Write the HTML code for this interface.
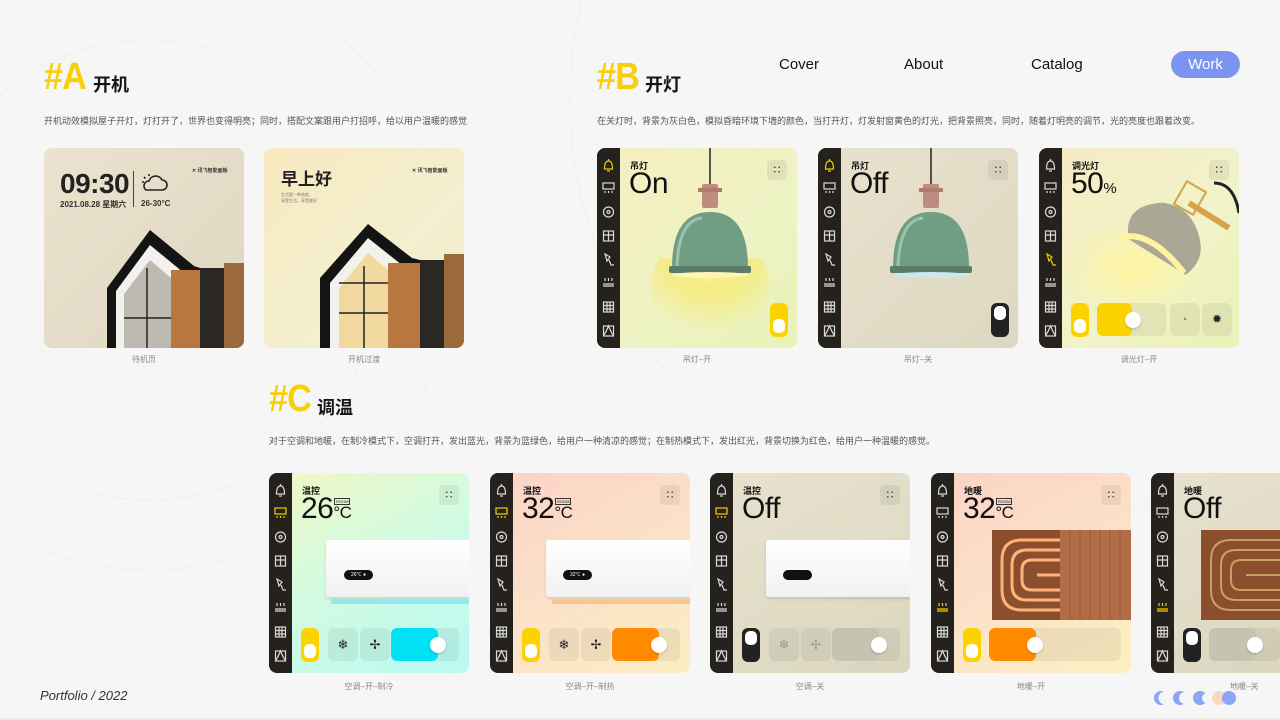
<!DOCTYPE html>
<html><head><meta charset="utf-8"><style>
*{margin:0;padding:0;box-sizing:border-box}
body{width:1280px;height:720px;overflow:hidden;background:#f6f6f6;position:relative;font-family:"Liberation Sans","Noto Sans CJK SC",sans-serif;color:#111}
.a{position:absolute}
.hd{position:absolute;font-family:"Liberation Sans Narrow","Liberation Sans",sans-serif;font-weight:900;font-size:38px;color:#f7cf0a;letter-spacing:-1px;transform:scaleX(.9);transform-origin:left}
.ht{position:absolute;font-size:18px;font-weight:700;color:#151515}
.ds{position:absolute;font-size:9px;color:#555;white-space:nowrap}
.cap{position:absolute;width:200px;text-align:center;font-size:8px;color:#888}
.card{position:absolute;width:200px;height:200px;border-radius:8px;overflow:hidden}
.sb{position:absolute;left:0;top:0;width:23px;height:200px;background:#25221e}
.sb svg{stroke:#d9d9d9;fill:none;stroke-width:1.2}
.h1 .i1,.h2 .i2,.h5 .i5,.h6 .i6{stroke:#f5cd00}
.lb{position:absolute;left:33px;top:11px;font-size:9px;font-weight:700}
.big{position:absolute;left:32px;top:20px;font-size:30px;line-height:32px;font-weight:400;letter-spacing:-.5px}
.dots{position:absolute;left:170px;top:12px;width:20px;height:20px;border-radius:4px;background:rgba(0,0,0,.06);font-size:9px;text-align:center;line-height:20px;color:#333;font-weight:700}
.tg{position:absolute;width:18px;height:34px;border-radius:6px;background:#fcd200}
.tg i{position:absolute;left:3px;top:16px;width:12px;height:14px;border-radius:5px;background:#fff}
.tg.off{background:#222}.tg.off i{top:3px}
.btn{position:absolute;width:30px;height:33px;border-radius:6px;background:rgba(0,0,0,.06);text-align:center;line-height:33px;font-size:13px;color:#222}
.sl{position:absolute;height:33px;border-radius:6px;background:rgba(0,0,0,.06);overflow:hidden}
.sl b{position:absolute;left:0;top:0;height:33px;border-radius:6px}
.kn{position:absolute;width:16px;height:16px;border-radius:50%;background:#fff;box-shadow:0 1px 2px rgba(0,0,0,.2)}
.nav{position:absolute;top:56px;font-size:15px;color:#111}
</style></head><body>
<svg class="a" style="left:0;top:0" width="1280" height="720" fill="none" stroke="#efefef" stroke-width="1">
<circle cx="150" cy="270" r="230"/><circle cx="150" cy="270" r="300"/><circle cx="1000" cy="100" r="430"/>
</svg>

<div class="hd" style="left:44px;top:56px">#A</div>
<div class="ht" style="left:93px;top:71px">开机</div>
<div class="ds" style="left:44px;top:114px">开机动效模拟屋子开灯，灯打开了，世界也变得明亮；同时，搭配文案跟用户打招呼，给以用户温暖的感觉</div>

<div class="card" style="left:44px;top:148px;background:linear-gradient(135deg,#ece3cf,#ddd6c0)">
<div class="a" style="left:16px;top:20px;font-size:28px;font-weight:700;letter-spacing:-.5px;color:#222">09:30</div>
<div class="a" style="left:16px;top:51px;font-size:8px;font-weight:700;color:#333">2021.08.28 星期六</div>
<div class="a" style="left:89px;top:23px;width:1px;height:36px;background:#444"></div>
<svg class="a" style="left:96px;top:22px" width="30" height="24" fill="none" stroke="#222" stroke-width="1.6"><path d="M6 20h16a5 5 0 0 0 0-10a7 7 0 0 0-13 1a5 5 0 0 0-3 9z"/><path d="M9 4v2M4 7l1.5 1.5M2 12h2"/></svg>
<div class="a" style="left:97px;top:51px;font-size:8px;font-weight:700;color:#333">26-30°C</div>
<div class="a" style="left:148px;top:19px;font-size:5px;font-weight:700;color:#333">✕ 讯飞智能面板</div>
<svg class="a" style="left:0;top:0" width="200" height="200">
<polygon points="63,200 63,140 106,82 150,118 156,120 156,200" fill="#141414"/>
<polygon points="72,200 72,143 106,97 140,125 140,200" fill="#f2f1ef"/>
<polygon points="80,200 80,146 106,112 127,130 127,200" fill="#bdbab2"/>
<rect x="127" y="122" width="29" height="78" fill="#b7773f"/>
<rect x="156" y="120" width="44" height="80" fill="#2b2724"/>
<rect x="180" y="115" width="20" height="85" fill="#9a6a3c"/>
<path d="M80 170h47M103 120v80" stroke="#222" stroke-width="1.5"/>
</svg>
</div>
<div class="cap" style="left:44px;top:354px">待机页</div>

<div class="card" style="left:264px;top:148px;background:linear-gradient(135deg,#f8e9bf,#f3efcf 60%,#eef0c9)">
<div class="a" style="left:17px;top:17px;font-size:17px;font-weight:700;color:#222">早上好</div>
<div class="a" style="left:17px;top:44px;font-size:4px;color:#777;line-height:6px">生活是一种态度，<br>享受生活，享受美好</div>
<div class="a" style="left:148px;top:19px;font-size:5px;font-weight:700;color:#333">✕ 讯飞智能面板</div>
<svg class="a" style="left:0;top:0" width="200" height="200">
<polygon points="56,200 56,130 104,76 148,110 156,112 156,200" fill="#141414"/>
<polygon points="66,200 66,135 104,90 138,117 138,200" fill="#f3f1ec"/>
<polygon points="75,200 75,140 104,105 124,122 124,200" fill="#f1d9a0"/>
<rect x="124" y="115" width="32" height="85" fill="#b7773f"/>
<rect x="156" y="112" width="44" height="88" fill="#2b2724"/>
<rect x="180" y="106" width="20" height="94" fill="#9a6a3c"/>
<path d="M75 165h49M100 118v82M75 135h49" stroke="#222" stroke-width="1.5"/>
</svg>
</div>
<div class="cap" style="left:264px;top:354px">开机过渡</div>

<div class="hd" style="left:597px;top:56px">#B</div>
<div class="ht" style="left:645px;top:71px">开灯</div>
<div class="ds" style="left:597px;top:114px">在关灯时，背景为灰白色，模拟昏暗环境下墙的颜色，当打开灯，灯发射窗黄色的灯光，把背景照亮，同时，随着灯明亮的调节，光的亮度也跟着改变。</div>

<div class="nav" style="left:779px">Cover</div>
<div class="nav" style="left:904px">About</div>
<div class="nav" style="left:1031px">Catalog</div>
<div class="a" style="left:1171px;top:51px;width:69px;height:27px;border-radius:14px;background:#7b94ef;color:#fff;font-size:15px;text-align:center;line-height:27px">Work</div>

<div class="card h1" style="left:597px;top:148px;background:linear-gradient(135deg,#f6eec0,#eef3c4 60%,#e8f2b6)">
<svg class="a" style="left:40px;top:110px" width="160" height="90"><defs><radialGradient id="g1" cx=".5" cy=".2" r=".7"><stop offset="0" stop-color="#fff7a0"/><stop offset=".5" stop-color="#f8e86a" stop-opacity=".7"/><stop offset="1" stop-color="#f8e86a" stop-opacity="0"/></radialGradient></defs><ellipse cx="73" cy="30" rx="60" ry="55" fill="url(#g1)"/></svg>
<div class="sb"><svg width="23" height="200"><g class="i1"><path d="M11.5 11v2M7.5 21q0-8 4-8t4 8zM10 23h3"/></g><g class="i2"><rect x="6" y="35" width="11" height="6"/><path d="M8 43v2M11.5 43v2M15 43v2"/></g><g class="i3"><circle cx="11.5" cy="64" r="5"/><circle cx="11.5" cy="64" r="1.5"/></g><g class="i4"><rect x="6.5" y="83" width="10" height="10"/><path d="M11.5 83v10M6.5 87h10"/></g><g class="i5"><path d="M8 106l5 3-3 4zM12 112l2 5h3"/></g><g class="i6"><path d="M6 138h11M6 136h11M8 130v3M11.5 130v3M15 130v3"/></g><g class="i7"><rect x="6.5" y="154" width="10" height="10"/><path d="M6.5 157.5h10M6.5 161h10M10 154v10M13 154v10"/></g><g class="i8"><rect x="6.5" y="178" width="10" height="10"/><path d="M6.5 188q3-5 5-10q2 5 5 10"/></g></svg></div>
<div class="lb">吊灯</div><div class="big">On</div><div class="dots">∷</div>
<svg class="a" style="left:60px;top:0" width="110" height="135"><path d="M53 0v36" stroke="#222" stroke-width="1.5"/><rect x="45" y="36" width="16" height="24" rx="2" fill="#c08c7f"/><rect x="41" y="40" width="24" height="4" fill="#b07a6d"/><path d="M15 120Q15 64 53 64Q91 64 91 120Z" fill="#6f9e85"/><path d="M20 118Q22 72 45 70" stroke="#9cc4ad" stroke-width="3" fill="none"/><rect x="12" y="118" width="82" height="7" rx="2" fill="#5a7c6a"/><ellipse cx="53" cy="127" rx="38" ry="3" fill="#fff4b0"/></svg>
<div class="tg" style="left:173px;top:155px"><i></i></div>
</div>
<div class="cap" style="left:597px;top:354px">吊灯–开</div>

<div class="card h1" style="left:818px;top:148px;background:linear-gradient(135deg,#e8e1cd,#e2dcc7 60%,#dcd8c0)">
<div class="sb"><svg width="23" height="200"><g class="i1"><path d="M11.5 11v2M7.5 21q0-8 4-8t4 8zM10 23h3"/></g><g class="i2"><rect x="6" y="35" width="11" height="6"/><path d="M8 43v2M11.5 43v2M15 43v2"/></g><g class="i3"><circle cx="11.5" cy="64" r="5"/><circle cx="11.5" cy="64" r="1.5"/></g><g class="i4"><rect x="6.5" y="83" width="10" height="10"/><path d="M11.5 83v10M6.5 87h10"/></g><g class="i5"><path d="M8 106l5 3-3 4zM12 112l2 5h3"/></g><g class="i6"><path d="M6 138h11M6 136h11M8 130v3M11.5 130v3M15 130v3"/></g><g class="i7"><rect x="6.5" y="154" width="10" height="10"/><path d="M6.5 157.5h10M6.5 161h10M10 154v10M13 154v10"/></g><g class="i8"><rect x="6.5" y="178" width="10" height="10"/><path d="M6.5 188q3-5 5-10q2 5 5 10"/></g></svg></div>
<div class="lb">吊灯</div><div class="big">Off</div><div class="dots">∷</div>
<svg class="a" style="left:60px;top:0" width="110" height="135"><path d="M53 0v36" stroke="#222" stroke-width="1.5"/><rect x="45" y="36" width="16" height="24" rx="2" fill="#c08c7f"/><rect x="41" y="40" width="24" height="4" fill="#b07a6d"/><path d="M15 120Q15 64 53 64Q91 64 91 120Z" fill="#6f9e85"/><path d="M20 118Q22 72 45 70" stroke="#9cc4ad" stroke-width="3" fill="none"/><rect x="12" y="118" width="82" height="7" rx="2" fill="#5a7c6a"/><ellipse cx="53" cy="127" rx="38" ry="3" fill="#cfe6ea"/></svg>
<div class="tg off" style="left:173px;top:155px"><i></i></div>
</div>
<div class="cap" style="left:818px;top:354px">吊灯–关</div>

<div class="card h5" style="left:1039px;top:148px;background:linear-gradient(135deg,#f6eac4,#f1f3c8 60%,#eaf2b8)">
<svg class="a" style="left:20px;top:60px" width="180" height="120"><defs><radialGradient id="g2" cx=".5" cy=".5" r=".5"><stop offset="0" stop-color="#fff4a0"/><stop offset="1" stop-color="#fff4a0" stop-opacity="0"/></radialGradient></defs><ellipse cx="75" cy="60" rx="70" ry="50" fill="url(#g2)"/></svg>
<div class="sb"><svg width="23" height="200"><g class="i1"><path d="M11.5 11v2M7.5 21q0-8 4-8t4 8zM10 23h3"/></g><g class="i2"><rect x="6" y="35" width="11" height="6"/><path d="M8 43v2M11.5 43v2M15 43v2"/></g><g class="i3"><circle cx="11.5" cy="64" r="5"/><circle cx="11.5" cy="64" r="1.5"/></g><g class="i4"><rect x="6.5" y="83" width="10" height="10"/><path d="M11.5 83v10M6.5 87h10"/></g><g class="i5"><path d="M8 106l5 3-3 4zM12 112l2 5h3"/></g><g class="i6"><path d="M6 138h11M6 136h11M8 130v3M11.5 130v3M15 130v3"/></g><g class="i7"><rect x="6.5" y="154" width="10" height="10"/><path d="M6.5 157.5h10M6.5 161h10M10 154v10M13 154v10"/></g><g class="i8"><rect x="6.5" y="178" width="10" height="10"/><path d="M6.5 188q3-5 5-10q2 5 5 10"/></g></svg></div>
<div class="lb">调光灯</div><div class="big">50<span style="font-size:15px">%</span></div><div class="dots">∷</div>
<svg class="a" style="left:70px;top:25px" width="130" height="110"><path d="M105 10q20 0 25 30" stroke="#222" stroke-width="3" fill="none"/><path d="M80 30l40 25" stroke="#d4a34c" stroke-width="6"/><rect x="70" y="12" width="22" height="26" fill="none" stroke="#d4a34c" stroke-width="2" transform="rotate(30 81 25)"/><path d="M20 60Q20 25 60 30Q90 40 90 75Q90 95 70 105Z" fill="#aaa894" transform="rotate(-10 55 65)"/><path d="M10 65Q40 55 75 100" stroke="#fff2a0" stroke-width="6" fill="none"/></svg>
<div class="tg" style="left:32px;top:155px"><i></i></div>
<div class="sl" style="left:58px;top:155px;width:69px"><b style="width:35px;background:#fcd200"></b></div><div class="kn" style="left:86px;top:164px"></div>
<div class="btn" style="left:131px;top:155px;font-size:10px">◦</div><div class="btn" style="left:163px;top:155px;font-size:12px">✹</div>
</div>
<div class="cap" style="left:1039px;top:354px">调光灯–开</div>

<div class="hd" style="left:269px;top:378px">#C</div>
<div class="ht" style="left:317px;top:394px">调温</div>
<div class="ds" style="left:269px;top:434px">对于空调和地暖，在制冷模式下，空调打开，发出蓝光，背景为蓝绿色，给用户一种清凉的感觉；在制热模式下，发出红光，背景切换为红色，给用户一种温暖的感觉。</div>

<div class="card h2" style="left:269px;top:473px;background:linear-gradient(150deg,#f2f7c4,#d3fbe0 45%,#b9f9f3)">
<div class="sb"><svg width="23" height="200"><g class="i1"><path d="M11.5 11v2M7.5 21q0-8 4-8t4 8zM10 23h3"/></g><g class="i2"><rect x="6" y="35" width="11" height="6"/><path d="M8 43v2M11.5 43v2M15 43v2"/></g><g class="i3"><circle cx="11.5" cy="64" r="5"/><circle cx="11.5" cy="64" r="1.5"/></g><g class="i4"><rect x="6.5" y="83" width="10" height="10"/><path d="M11.5 83v10M6.5 87h10"/></g><g class="i5"><path d="M8 106l5 3-3 4zM12 112l2 5h3"/></g><g class="i6"><path d="M6 138h11M6 136h11M8 130v3M11.5 130v3M15 130v3"/></g><g class="i7"><rect x="6.5" y="154" width="10" height="10"/><path d="M6.5 157.5h10M6.5 161h10M10 154v10M13 154v10"/></g><g class="i8"><rect x="6.5" y="178" width="10" height="10"/><path d="M6.5 188q3-5 5-10q2 5 5 10"/></g></svg></div>
<div class="lb">温控</div><div class="big">26<span style="font-size:17px">°C</span></div><div class="a" style="left:65px;top:25px;font-size:4px;border:1px solid #333;padding:0 1px">ROOM</div><div class="dots">∷</div>
<div class="a" style="left:57px;top:67px;width:143px;height:57px;background:linear-gradient(#fff,#f1f1f1);border-radius:3px 0 0 3px;box-shadow:0 2px 3px rgba(0,0,0,.12)"></div>
<div class="a" style="left:75px;top:97px;width:29px;height:10px;border-radius:5px;background:#111;color:#fff;font-size:5px;line-height:10px;text-align:center">26℃ ●</div>
<div class="a" style="left:62px;top:126px;width:138px;height:5px;background:#8ee9f0"></div>
<div class="tg" style="left:32px;top:155px"><i></i></div>
<div class="btn" style="left:59px;top:155px">❄</div><div class="btn" style="left:91px;top:155px">✢</div>
<div class="sl" style="left:122px;top:155px;width:68px"><b style="width:47px;background:#00e1f5"></b></div><div class="kn" style="left:161px;top:164px"></div>
</div>
<div class="cap" style="left:269px;top:681px">空调–开–制冷</div>

<div class="card h2" style="left:490px;top:473px;background:linear-gradient(150deg,#fcd2c6,#fbe1c8 50%,#fbeec2)">
<div class="sb"><svg width="23" height="200"><g class="i1"><path d="M11.5 11v2M7.5 21q0-8 4-8t4 8zM10 23h3"/></g><g class="i2"><rect x="6" y="35" width="11" height="6"/><path d="M8 43v2M11.5 43v2M15 43v2"/></g><g class="i3"><circle cx="11.5" cy="64" r="5"/><circle cx="11.5" cy="64" r="1.5"/></g><g class="i4"><rect x="6.5" y="83" width="10" height="10"/><path d="M11.5 83v10M6.5 87h10"/></g><g class="i5"><path d="M8 106l5 3-3 4zM12 112l2 5h3"/></g><g class="i6"><path d="M6 138h11M6 136h11M8 130v3M11.5 130v3M15 130v3"/></g><g class="i7"><rect x="6.5" y="154" width="10" height="10"/><path d="M6.5 157.5h10M6.5 161h10M10 154v10M13 154v10"/></g><g class="i8"><rect x="6.5" y="178" width="10" height="10"/><path d="M6.5 188q3-5 5-10q2 5 5 10"/></g></svg></div>
<div class="lb">温控</div><div class="big">32<span style="font-size:17px">°C</span></div><div class="a" style="left:65px;top:25px;font-size:4px;border:1px solid #333;padding:0 1px">ROOM</div><div class="dots">∷</div>
<div class="a" style="left:56px;top:67px;width:144px;height:57px;background:linear-gradient(#fff,#f1f1f1);border-radius:3px 0 0 3px;box-shadow:0 2px 3px rgba(0,0,0,.12)"></div>
<div class="a" style="left:73px;top:97px;width:29px;height:10px;border-radius:5px;background:#111;color:#fff;font-size:5px;line-height:10px;text-align:center">32℃ ●</div>
<div class="a" style="left:62px;top:126px;width:138px;height:5px;background:#f8c690"></div>
<div class="tg" style="left:32px;top:155px"><i></i></div>
<div class="btn" style="left:59px;top:155px">❄</div><div class="btn" style="left:91px;top:155px">✢</div>
<div class="sl" style="left:122px;top:155px;width:68px"><b style="width:47px;background:#ff8a00"></b></div><div class="kn" style="left:161px;top:164px"></div>
</div>
<div class="cap" style="left:490px;top:681px">空调–开–制热</div>

<div class="card h2" style="left:710px;top:473px;background:linear-gradient(150deg,#e7e1cd,#e0dcc6 60%,#dad6be)">
<div class="sb"><svg width="23" height="200"><g class="i1"><path d="M11.5 11v2M7.5 21q0-8 4-8t4 8zM10 23h3"/></g><g class="i2"><rect x="6" y="35" width="11" height="6"/><path d="M8 43v2M11.5 43v2M15 43v2"/></g><g class="i3"><circle cx="11.5" cy="64" r="5"/><circle cx="11.5" cy="64" r="1.5"/></g><g class="i4"><rect x="6.5" y="83" width="10" height="10"/><path d="M11.5 83v10M6.5 87h10"/></g><g class="i5"><path d="M8 106l5 3-3 4zM12 112l2 5h3"/></g><g class="i6"><path d="M6 138h11M6 136h11M8 130v3M11.5 130v3M15 130v3"/></g><g class="i7"><rect x="6.5" y="154" width="10" height="10"/><path d="M6.5 157.5h10M6.5 161h10M10 154v10M13 154v10"/></g><g class="i8"><rect x="6.5" y="178" width="10" height="10"/><path d="M6.5 188q3-5 5-10q2 5 5 10"/></g></svg></div>
<div class="lb">温控</div><div class="big">Off</div><div class="dots">∷</div>
<div class="a" style="left:56px;top:67px;width:144px;height:57px;background:linear-gradient(#fff,#f1f1f1);border-radius:3px 0 0 3px;box-shadow:0 2px 3px rgba(0,0,0,.12)"></div>
<div class="a" style="left:73px;top:97px;width:29px;height:10px;border-radius:5px;background:#111"></div>
<div class="tg off" style="left:32px;top:155px"><i></i></div>
<div class="btn" style="left:59px;top:155px;color:#999">❄</div><div class="btn" style="left:91px;top:155px;color:#999">✢</div>
<div class="sl" style="left:122px;top:155px;width:68px"><b style="width:47px;background:#c6c3b0"></b></div><div class="kn" style="left:161px;top:164px"></div>
</div>
<div class="cap" style="left:710px;top:681px">空调–关</div>

<div class="card h6" style="left:931px;top:473px;background:linear-gradient(150deg,#fcd2c6,#fbe1c8 50%,#fbf1c2)">
<div class="sb"><svg width="23" height="200"><g class="i1"><path d="M11.5 11v2M7.5 21q0-8 4-8t4 8zM10 23h3"/></g><g class="i2"><rect x="6" y="35" width="11" height="6"/><path d="M8 43v2M11.5 43v2M15 43v2"/></g><g class="i3"><circle cx="11.5" cy="64" r="5"/><circle cx="11.5" cy="64" r="1.5"/></g><g class="i4"><rect x="6.5" y="83" width="10" height="10"/><path d="M11.5 83v10M6.5 87h10"/></g><g class="i5"><path d="M8 106l5 3-3 4zM12 112l2 5h3"/></g><g class="i6"><path d="M6 138h11M6 136h11M8 130v3M11.5 130v3M15 130v3"/></g><g class="i7"><rect x="6.5" y="154" width="10" height="10"/><path d="M6.5 157.5h10M6.5 161h10M10 154v10M13 154v10"/></g><g class="i8"><rect x="6.5" y="178" width="10" height="10"/><path d="M6.5 188q3-5 5-10q2 5 5 10"/></g></svg></div>
<div class="lb">地暖</div><div class="big">32<span style="font-size:17px">°C</span></div><div class="a" style="left:65px;top:25px;font-size:4px;border:1px solid #333;padding:0 1px">ROOM</div><div class="dots">∷</div>
<svg class="a" style="left:61px;top:57px" width="139" height="90"><rect width="139" height="90" fill="#8c4f2e"/><rect x="68" width="71" height="90" fill="#b26c48"/><path d="M78 0v90M88 0v90M98 0v90M108 0v90M118 0v90M128 0v90" stroke="#9a5a39"/><g fill="none" stroke="#ffb27a" stroke-width="3"><path d="M68 10H30Q10 10 10 30V60Q10 80 30 80H68"/><path d="M68 20H35Q20 20 20 35V55Q20 70 35 70H68"/><path d="M68 30H40Q30 30 30 40V50Q30 60 40 60H68"/><path d="M68 45H45"/></g></svg>
<div class="tg" style="left:32px;top:155px"><i></i></div>
<div class="sl" style="left:58px;top:155px;width:132px"><b style="width:47px;background:#ff8a00"></b></div><div class="kn" style="left:96px;top:164px"></div>
</div>
<div class="cap" style="left:931px;top:681px">地暖–开</div>

<div class="card h6" style="left:1151px;top:473px;width:129px;border-radius:8px 0 0 8px;background:linear-gradient(150deg,#e7e1cd,#e0dcc6 60%,#dad6be)">
<div class="sb"><svg width="23" height="200"><g class="i1"><path d="M11.5 11v2M7.5 21q0-8 4-8t4 8zM10 23h3"/></g><g class="i2"><rect x="6" y="35" width="11" height="6"/><path d="M8 43v2M11.5 43v2M15 43v2"/></g><g class="i3"><circle cx="11.5" cy="64" r="5"/><circle cx="11.5" cy="64" r="1.5"/></g><g class="i4"><rect x="6.5" y="83" width="10" height="10"/><path d="M11.5 83v10M6.5 87h10"/></g><g class="i5"><path d="M8 106l5 3-3 4zM12 112l2 5h3"/></g><g class="i6"><path d="M6 138h11M6 136h11M8 130v3M11.5 130v3M15 130v3"/></g><g class="i7"><rect x="6.5" y="154" width="10" height="10"/><path d="M6.5 157.5h10M6.5 161h10M10 154v10M13 154v10"/></g><g class="i8"><rect x="6.5" y="178" width="10" height="10"/><path d="M6.5 188q3-5 5-10q2 5 5 10"/></g></svg></div>
<div class="lb">地暖</div><div class="big">Off</div>
<svg class="a" style="left:50px;top:57px" width="79" height="90"><rect width="79" height="90" fill="#8c4f2e"/><g fill="none" stroke="#c9a063" stroke-width="2"><path d="M80 10H30Q10 10 10 30V60Q10 80 30 80H80"/><path d="M80 20H35Q20 20 20 35V55Q20 70 35 70H80"/><path d="M80 30H40Q30 30 30 40V50Q30 60 40 60H80"/><path d="M80 45H45"/></g></svg>
<div class="tg off" style="left:32px;top:155px"><i></i></div>
<div class="sl" style="left:58px;top:155px;width:71px"><b style="width:47px;background:#c6c3b0"></b></div><div class="kn" style="left:96px;top:164px"></div>
</div>
<div class="a" style="left:1230px;top:681px;font-size:8px;color:#888">地暖–关</div>

<div class="a" style="left:40px;top:688px;font-size:13px;font-style:italic;color:#333">Portfolio / 2022</div>
<svg class="a" style="left:1150px;top:688px" width="95" height="20">
<circle cx="11" cy="10" r="7" fill="#8aa6f4"/><circle cx="15" cy="10" r="6.5" fill="#f6f6f6"/>
<circle cx="30" cy="10" r="7" fill="#8aa6f4"/><circle cx="35" cy="10" r="6" fill="#f6f6f6"/>
<circle cx="50" cy="10" r="7" fill="#8aa6f4"/><circle cx="57" cy="10" r="5" fill="#f6f6f6"/>
<circle cx="69" cy="10" r="7" fill="#f9d7c6"/><circle cx="79" cy="10" r="7" fill="#8aa6f4"/>
</svg>
<div class="a" style="left:0;top:718px;width:1280px;height:2px;background:#e8e8e8"></div>
</body></html>
